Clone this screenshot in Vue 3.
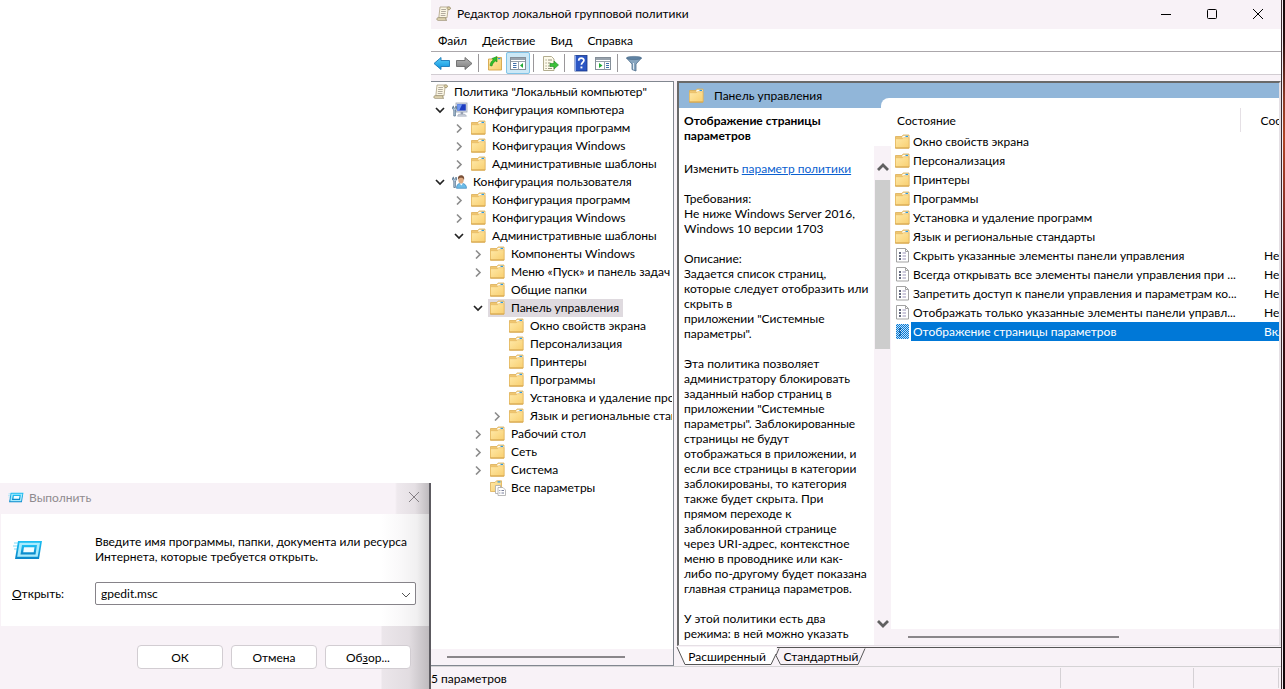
<script setup>
import { ref } from 'vue'

const menus = ['Файл', 'Действие', 'Вид', 'Справка']

const tree = [
  { level: 0, icon: 'scroll', text: 'Политика "Локальный компьютер"' },
  { level: 1, icon: 'computer', text: 'Конфигурация компьютера', state: 'open' },
  { level: 2, icon: 'folder', text: 'Конфигурация программ', state: 'closed' },
  { level: 2, icon: 'folder', text: 'Конфигурация Windows', state: 'closed' },
  { level: 2, icon: 'folder', text: 'Административные шаблоны', state: 'closed' },
  { level: 1, icon: 'user', text: 'Конфигурация пользователя', state: 'open' },
  { level: 2, icon: 'folder', text: 'Конфигурация программ', state: 'closed' },
  { level: 2, icon: 'folder', text: 'Конфигурация Windows', state: 'closed' },
  { level: 2, icon: 'folder', text: 'Административные шаблоны', state: 'open' },
  { level: 3, icon: 'folder', text: 'Компоненты Windows', state: 'closed' },
  { level: 3, icon: 'folder', text: 'Меню «Пуск» и панель задач', state: 'closed' },
  { level: 3, icon: 'folder', text: 'Общие папки' },
  { level: 3, icon: 'folder', text: 'Панель управления', state: 'open', selected: true },
  { level: 4, icon: 'folder', text: 'Окно свойств экрана' },
  { level: 4, icon: 'folder', text: 'Персонализация' },
  { level: 4, icon: 'folder', text: 'Принтеры' },
  { level: 4, icon: 'folder', text: 'Программы' },
  { level: 4, icon: 'folder', text: 'Установка и удаление программ' },
  { level: 4, icon: 'folder', text: 'Язык и региональные стандарты', state: 'closed' },
  { level: 3, icon: 'folder', text: 'Рабочий стол', state: 'closed' },
  { level: 3, icon: 'folder', text: 'Сеть', state: 'closed' },
  { level: 3, icon: 'folder', text: 'Система', state: 'closed' },
  { level: 3, icon: 'allsettings', text: 'Все параметры' },
]

const rows = [
  { icon: 'folder', name: 'Окно свойств экрана', state: '' },
  { icon: 'folder', name: 'Персонализация', state: '' },
  { icon: 'folder', name: 'Принтеры', state: '' },
  { icon: 'folder', name: 'Программы', state: '' },
  { icon: 'folder', name: 'Установка и удаление программ', state: '' },
  { icon: 'folder', name: 'Язык и региональные стандарты', state: '' },
  { icon: 'setting', name: 'Скрыть указанные элементы панели управления', state: 'Не задана' },
  { icon: 'setting', name: 'Всегда открывать все элементы панели управления при ...', state: 'Не задана' },
  { icon: 'setting', name: 'Запретить доступ к панели управления и параметрам ко...', state: 'Не задана' },
  { icon: 'setting', name: 'Отображать только указанные элементы панели управл...', state: 'Не задана' },
  { icon: 'settingsel', name: 'Отображение страницы параметров', state: 'Включена', selected: true },
]

const requirements = ['Не ниже Windows Server 2016,', 'Windows 10 версии 1703'].join('\n')

const description = [
  'Задается список страниц,',
  'которые следует отобразить или',
  'скрыть в',
  'приложении "Системные',
  'параметры".',
  '',
  'Эта политика позволяет',
  'администратору блокировать',
  'заданный набор страниц в',
  'приложении "Системные',
  'параметры". Заблокированные',
  'страницы не будут',
  'отображаться в приложении, и',
  'если все страницы в категории',
  'заблокированы, то категория',
  'также будет скрыта. При',
  'прямом переходе к',
  'заблокированной странице',
  'через URI-адрес, контекстное',
  'меню в проводнике или как-',
  'либо по-другому будет показана',
  'главная страница параметров.',
  '',
  'У этой политики есть два',
  'режима: в ней можно указать',
].join('\n')

const command = ref('gpedit.msc')
</script>

<template>
  <svg class="defs" aria-hidden="true">
    <defs>
      <linearGradient id="gFolder" x1="0" y1="0" x2="1" y2="1">
        <stop offset="0" stop-color="#ffe9a8" />
        <stop offset="1" stop-color="#f8cf70" />
      </linearGradient>
      <linearGradient id="gBlue" x1="0" y1="0" x2="0" y2="1">
        <stop offset="0" stop-color="#5cd0fa" />
        <stop offset="1" stop-color="#0a90dc" />
      </linearGradient>
      <linearGradient id="gGray" x1="0" y1="0" x2="0" y2="1">
        <stop offset="0" stop-color="#b8b8b8" />
        <stop offset="1" stop-color="#7c7c7c" />
      </linearGradient>
      <linearGradient id="gRun" x1="0" y1="0" x2="0" y2="1">
        <stop offset="0" stop-color="#1cc0f4" />
        <stop offset="1" stop-color="#0a86c8" />
      </linearGradient>
      <pattern id="pDots" width="2" height="2" patternUnits="userSpaceOnUse">
        <rect width="2" height="2" fill="#c4e0f6" />
        <rect width="1" height="1" fill="#0078d7" />
        <rect x="1" y="1" width="1" height="1" fill="#0078d7" />
      </pattern>
    </defs>
    <symbol id="folder" viewBox="0 0 16 16">
      <path d="M.5 14V2.500h6.500l1-1.500h6v13z" fill="#efc670" stroke="#dcae55" stroke-width=".8" />
      <rect x="7.500" y="1.800" width="6" height="2.200" fill="#fffdf4" />
      <rect x="10.500" y="1.800" width="2.500" height="1.200" fill="#2f9be0" />
      <path d="M.5 14V4.700h7l1-1H14V14z" fill="url(#gFolder)" stroke="#e5b962" stroke-width=".7" />
      <path d="M.2 14h14" stroke="#d3a147" stroke-width=".9" />
    </symbol>
    <symbol id="scroll" viewBox="0 0 16 16">
      <path d="M4 1h9c1.400 0 1.800 2.200.2 2.600H12l-1 8.200H2.800z" fill="#fbf6e4" stroke="#a09472" stroke-width=".7" />
      <path d="M11.600 1c-.8.800-.7 2.300.4 2.600h1.600c1.400-.4 1-2.600-.3-2.600z" fill="#ddd0a6" stroke="#8a7e5c" stroke-width=".6" />
      <path d="M1.800 11.800H10c-.6 1 0 2.300.8 2.500H2c-1.500 0-1.700-2.200-.2-2.500z" fill="#eadfbb" stroke="#8a7e5c" stroke-width=".7" />
      <path d="M5.300 3.500h4.700M5.100 5.500h4.700M4.900 7.500h4.700M4.700 9.500h4.700" stroke="#a9a395" stroke-width=".9" />
    </symbol>
    <symbol id="computer" viewBox="0 0 16 16">
      <rect x="4" y="1" width="11" height="9" fill="#dde2ea" stroke="#97a1b2" stroke-width=".8" />
      <rect x="5.200" y="2.200" width="8.600" height="6.400" fill="#1d3cc0" />
      <path d="M5.200 2.200h5l-3 6.400h-2z" fill="#6f97f0" />
      <path d="M6.500 12.300h6.500l1.500 1.900H5.500z" fill="#cfd4dd" stroke="#97a1b2" stroke-width=".6" />
      <rect x="8.600" y="10" width="2.600" height="2.300" fill="#97a1b2" />
      <path d="M.6 4.800v2.200l1.200 1v6h1.600V8l1.200-1V4.800L3.800 4v2H1.500V4z" fill="#b5cce0" stroke="#476583" stroke-width=".7" />
    </symbol>
    <symbol id="user" viewBox="0 0 16 16">
      <path d="M4.500 14.300c0-3.600 1.600-5 4.700-5s5.300 1.400 5.300 5z" fill="#6cbce8" stroke="#4189bd" stroke-width=".7" />
      <path d="M7.600 9.300l1.700 2.200 1.700-2.200z" fill="#fff" />
      <ellipse cx="9" cy="5.800" rx="2.700" ry="3.700" fill="#deaa82" />
      <path d="M6 5.500C5.600 2.500 7 1.300 9.100 1.300s3.700 1.500 2.900 4.800c-.6-1.500-1-2-2.400-2.400-1.300 0-2.900.4-3.600 1.800z" fill="#7b5138" />
      <path d="M.6 3.800v2.200l1.200 1v6.500h1.600V7l1.200-1V3.800L3.800 3v2H1.500V3z" fill="#b5cce0" stroke="#476583" stroke-width=".7" />
    </symbol>
    <symbol id="allsettings" viewBox="0 0 16 16">
      <path d="M.5 11.500V2.500H5l1.500-1.700h5v10.700z" fill="url(#gFolder)" stroke="#dcae55" stroke-width=".8" />
      <rect x="7.500" y="1.300" width="3" height="1.200" fill="#2f9be0" />
      <path d="M5.500 5.500h5v8h-5z" fill="#fff" stroke="#a8a8a8" stroke-width=".8" />
      <path d="M8 7.500h5l2.500 2.500v5.500H8z" fill="#fff" stroke="#a8a8a8" stroke-width=".8" />
      <path d="M9.300 10.500h1M11.500 10.500h2.500M9.300 13h1M11.500 13h2.500" stroke="#6a7090" stroke-width=".9" />
    </symbol>
    <symbol id="setting" viewBox="0 0 16 16">
      <path d="M1.500.5h9l3 3v10.500h-12z" fill="#fff" stroke="#a3a3a3" />
      <path d="M10.500.5v3h3" fill="none" stroke="#a3a3a3" />
      <path d="M4 5h2M4 8h2M4 11h2" stroke="#333a55" stroke-width="1.400" />
      <path d="M7.500 5h3.500M7.500 8h3.500M7.500 11h3.500" stroke="#9a93b8" />
    </symbol>
    <symbol id="settingsel" viewBox="0 0 16 16">
      <rect x="1" y="0" width="13" height="15" fill="url(#pDots)" />
      <path d="M4 5h2M4 8h2M4 11h2" stroke="#0a4f94" stroke-width="1.400" />
    </symbol>
    <symbol id="run" viewBox="0 0 30 20">
      <path d="M1 3h6M0 6h5M1 9h4" stroke="#7fdcf8" stroke-width="1" />
      <path d="M5 1h24l-3 18H2z" fill="url(#gRun)" />
      <path d="M6.500 2.800h20.500l-2.300 14H4.200z" fill="#a9ebfd" />
      <path d="M9 5h15l-1.500 9.500H7.500z" fill="url(#gRun)" />
      <path d="M11 7.200h10.500l-.8 5H10.200z" fill="#f2fcff" />
    </symbol>
  </svg>

  <main class="desktop">
    <div class="left">
      <section class="run" aria-label="Выполнить">
        <header class="run-title">
          <svg class="run-small"><use href="#run" /></svg>
          <span>Выполнить</span>
          <button class="run-close" aria-label="Закрыть">
            <svg viewBox="0 0 12 12"><path d="M1 1l10 10M11 1L1 11" stroke="#858085" fill="none" /></svg>
          </button>
        </header>
        <div class="run-body">
          <div class="run-intro">
            <svg class="run-big"><use href="#run" /></svg>
            <p>Введите имя программы, папки, документа или ресурса<br />Интернета, которые требуется открыть.</p>
          </div>
          <div class="run-field">
            <label for="cmd"><u>О</u>ткрыть:</label>
            <div class="combo">
              <input id="cmd" v-model="command" type="text" />
              <button aria-label="Показать список">
                <svg viewBox="0 0 10 6"><path d="M1 1l4 4 4-4" stroke="#555" fill="none" /></svg>
              </button>
            </div>
          </div>
        </div>
        <footer class="run-foot">
          <button>ОК</button>
          <button>Отмена</button>
          <button>Об<u>з</u>ор...</button>
        </footer>
      </section>
    </div>

    <section class="editor">
      <header class="title">
        <svg class="ico"><use href="#scroll" /></svg>
        <h1>Редактор локальной групповой политики</h1>
        <div class="caption">
          <button aria-label="Свернуть"><svg viewBox="0 0 12 12"><path d="M1 6.500h10" stroke="#000" /></svg></button>
          <button aria-label="Развернуть"><svg viewBox="0 0 12 12"><rect x="1.500" y="1.500" width="9" height="9" rx="1" stroke="#000" fill="none" /></svg></button>
          <button aria-label="Закрыть"><svg viewBox="0 0 12 12"><path d="M1 1l10 10M11 1L1 11" stroke="#000" /></svg></button>
        </div>
      </header>

      <nav class="menu">
        <button v-for="m in menus" :key="m">{{ m }}</button>
      </nav>

      <div class="toolbar">
        <button aria-label="Назад">
          <svg viewBox="0 0 18 18"><path d="M1 9.500L8 3.500v3h8.500v6H8v3z" fill="url(#gBlue)" stroke="#1a78b8" stroke-width=".9" /></svg>
        </button>
        <button aria-label="Вперед">
          <svg viewBox="0 0 18 18"><path d="M17 9.500l-7-6v3H1.500v6H10v3z" fill="url(#gGray)" stroke="#6a6a6a" stroke-width=".9" /></svg>
        </button>
        <i></i>
        <button aria-label="Вверх на один уровень">
          <svg viewBox="0 0 18 18">
            <path d="M2.500 16V5h6L10 3.500h5.500V16z" fill="url(#gFolder)" stroke="#d6a548" stroke-width=".9" />
            <rect x="12" y="4" width="2.500" height="1.200" fill="#2f9be0" />
            <path d="M4 11.500c.5-3 1.500-4.500 3.500-5.500L6 4.500 11 2.500v5.500L9.500 7C7.500 8 6.500 10 6 12z" fill="#2fc02a" stroke="#1d8a1a" stroke-width=".6" />
          </svg>
        </button>
        <button class="on" aria-label="Показать дерево консоли">
          <svg viewBox="0 0 18 18">
            <rect x="1.500" y="3.500" width="15" height="12" fill="#fff" stroke="#858f99" />
            <path d="M2 5h14" stroke="#98a2ac" stroke-width="2" />
            <path d="M2 7.500h14" stroke="#98a2ac" />
            <path d="M9.500 8v7.500" stroke="#98a2ac" />
            <path d="M4 9.500h3.500M4 11.500h3.500M4 13.500h3.500" stroke="#3f6ea8" />
            <path d="M14 9v5l-3-2.500z" fill="#22ac38" />
          </svg>
        </button>
        <i></i>
        <button aria-label="Экспортировать список">
          <svg viewBox="0 0 18 18">
            <path d="M2.500 2.500h8l2.500 2.500v11.500H2.500z" fill="#fdfaea" stroke="#b3ad90" />
            <path d="M4.500 6h1.200M7 6h4M4.500 9h1.200M7 9h2.500M4.500 12h1.200M7 12h2.500M4.500 14.500h1.200M7 14.500h4" stroke="#8a8770" stroke-width=".9" />
            <path d="M9 9.500h4V7l4.500 4-4.500 4v-2.500H9z" fill="#3cc23a" stroke="#1d8a25" stroke-width=".6" />
          </svg>
        </button>
        <i></i>
        <button aria-label="Справка">
          <svg viewBox="0 0 18 18">
            <rect x="3" y="1.500" width="12" height="15.500" fill="#2b56c4" stroke="#173684" stroke-width=".8" />
            <path d="M3.500 1.500V17" stroke="#89a8ee" />
            <path d="M6.700 6.700c0-3.400 5.400-3.300 5.200-.2-.1 1.900-2.500 2-2.500 4.300" fill="none" stroke="#fff" stroke-width="1.700" />
            <rect x="8.500" y="12.500" width="1.900" height="1.900" fill="#fff" />
          </svg>
        </button>
        <button aria-label="Показать область действий">
          <svg viewBox="0 0 18 18">
            <rect x="1.500" y="3.500" width="15" height="12" fill="#fff" stroke="#858f99" />
            <path d="M2 5h14" stroke="#98a2ac" stroke-width="2" />
            <path d="M2 7.500h14" stroke="#98a2ac" />
            <path d="M10.500 8v7.500" stroke="#98a2ac" />
            <path d="M12 9.500h3M12 11.500h3M12 13.500h3" stroke="#3f6ea8" />
            <path d="M5 9v5l3.500-2.500z" fill="#22ac38" />
          </svg>
        </button>
        <i></i>
        <button aria-label="Фильтр">
          <svg viewBox="0 0 18 18">
            <path d="M1.500 4l5.500 6v5.500l4 1.500v-7l5.500-6z" fill="#87a5bf" stroke="#4d6d8b" stroke-width=".8" />
            <ellipse cx="9" cy="4" rx="7.500" ry="1.600" fill="#5f82a3" stroke="#4d6d8b" stroke-width=".6" />
            <path d="M8.500 9v6.500" stroke="#dfeaf3" />
          </svg>
        </button>
      </div>

      <div class="panes">
        <div class="tree-pane">
          <ul class="tree">
            <li v-for="(n, i) in tree" :key="i" :style="{ '--level': Math.max(n.level - 1, 0) }">
              <span v-if="n.level" class="exp">
                <button v-if="n.state" :aria-label="n.state === 'open' ? 'Свернуть ветвь' : 'Развернуть ветвь'">
                  <svg v-if="n.state === 'open'" viewBox="0 0 10 10"><path d="M1 3l4 4 4-4" stroke="#222" stroke-width="1.700" fill="none" /></svg>
                  <svg v-else viewBox="0 0 10 10"><path d="M3 1.500l4 4-4 4" stroke="#8c8c8c" stroke-width="1.600" fill="none" /></svg>
                </button>
              </span>
              <span class="node" :class="{ sel: n.selected }">
                <svg class="ico"><use :href="'#' + n.icon" /></svg>{{ n.text }}
              </span>
            </li>
          </ul>
          <div class="hbar tree-bar"><b></b></div>
        </div>

        <div class="right">
          <div class="result">
            <div class="head">
              <h2><svg class="ico"><use href="#folder" /></svg>Панель управления</h2>
              <div class="notch"></div>
            </div>
            <div class="split">
              <article class="info">
                <h3>Отображение страницы параметров</h3>
                <p>Изменить <a href="#">параметр политики</a></p>
                <p>Требования:<br />{{ requirements }}</p>
                <p>Описание:<br />{{ description }}</p>
              </article>
              <div class="vbar">
                <button aria-label="Прокрутить вверх"><svg viewBox="0 0 12 8"><path d="M1 7l5-5 5 5" stroke="#606060" stroke-width="2.800" fill="none" /></svg></button>
                <b></b>
                <button class="down" aria-label="Прокрутить вниз"><svg viewBox="0 0 12 8"><path d="M1 1l5 5 5-5" stroke="#606060" stroke-width="2.800" fill="none" /></svg></button>
              </div>
              <div class="list">
                <div class="list-view">
                  <table>
                    <colgroup><col class="c-ico" /><col class="c-name" /><col class="c-state" /></colgroup>
                    <thead>
                      <tr><th colspan="2" scope="col">Состояние</th><th scope="col" class="second">Состояние</th></tr>
                    </thead>
                    <tbody>
                      <tr v-for="r in rows" :key="r.name" :class="{ sel: r.selected }">
                        <td><svg class="ico"><use :href="'#' + r.icon" /></svg></td>
                        <td>{{ r.name }}</td>
                        <td class="st">{{ r.state }}</td>
                      </tr>
                    </tbody>
                  </table>
                </div>
                <div class="hbar list-bar"><b></b></div>
              </div>
            </div>
          </div>
          <div class="tabs" role="tablist">
            <button class="tab active" role="tab" aria-selected="true">
              <svg viewBox="0 0 100 18" preserveAspectRatio="none"><path d="M0 0l8 17.500h86L99 8V0z" fill="#fff" /><path d="M0 0l8 17.500h86L99 7" stroke="#555" fill="none" /></svg>
              <span>Расширенный</span>
            </button>
            <button class="tab" role="tab" aria-selected="false">
              <svg viewBox="0 0 88 18" preserveAspectRatio="none"><path d="M2 .5L-1 8l4.500 9.500H81L88 .5" stroke="#555" fill="none" /></svg>
              <span>Стандартный</span>
            </button>
            <div class="rest"></div>
          </div>
        </div>
      </div>

      <footer class="status">
        <span class="count">5 параметров</span>
        <span class="cell wide"></span>
        <span class="cell"></span>
      </footer>
    </section>
    <div class="edge"></div>
  </main>
</template>

<style>
html,
body {
  margin: 0;
  background: #fff;
}
</style>

<style scoped>
.defs {
  position: absolute;
  width: 0;
  height: 0;
}
.desktop {
  display: grid;
  grid-template-columns: 431px minmax(0, 1fr) 4px;
  height: 100vh;
  overflow: hidden;
  font-family: Lato, "Open Sans", "Noto Sans", sans-serif;
  font-size: 12px;
  line-height: 15px;
  color: #000;
}
button {
  font: inherit;
  color: inherit;
  background: none;
  border: 0;
  padding: 0;
  margin: 0;
}
h1,
h2,
h3,
p,
ul {
  margin: 0;
  padding: 0;
  font-size: inherit;
  font-weight: 400;
  list-style: none;
}
.ico {
  width: 16px;
  height: 16px;
  flex: none;
}

/* Run dialog */
.left {
  display: flex;
  flex-direction: column;
  justify-content: flex-end;
}
.run {
  background: #f8f2f7;
  border-right: 2px solid #5c5a60;
}
.run-title {
  display: flex;
  align-items: center;
  height: 31px;
  padding: 0 9px 3px 8px;
  box-sizing: border-box;
  color: #8f8a8f;
  background: linear-gradient(90deg, transparent calc(100% - 34px), rgba(90, 90, 90, 0.06) calc(100% - 32px), rgba(90, 90, 90, 0.12) calc(100% - 14px), rgba(90, 90, 90, 0.36));
}
.run-small {
  width: 16px;
  height: 11px;
  margin-right: 5px;
}
.run-close {
  margin-left: auto;
}
.run-close svg {
  display: block;
  width: 12px;
  height: 12px;
}
.run-body {
  background: linear-gradient(90deg, #fff calc(100% - 48px), #f9f8f9 calc(100% - 28px), #f1f0f1 calc(100% - 12px), #d6d5d6);
  height: 112px;
  margin-left: 1px;
  padding: 20px 13px 0 11px;
  box-sizing: border-box;
}
.run-intro {
  display: flex;
}
.run-intro p {
  white-space: nowrap;
}
.run-big {
  flex: none;
  width: 30px;
  height: 20px;
  margin: 6px 52px 0 1px;
}
.run-field {
  display: flex;
  align-items: center;
  margin-top: 18px;
}
.run-field label {
  width: 83px;
}
.combo {
  flex: 1;
  display: flex;
  height: 21px;
  border: 1px solid #868389;
  border-radius: 2px;
  background: #fff;
}
.combo input {
  flex: 1;
  min-width: 0;
  border: 0;
  outline: 0;
  padding: 0 5px;
  background: none;
  font: inherit;
}
.combo button {
  width: 18px;
}
.combo svg {
  width: 10px;
  height: 6px;
}
.run-foot {
  display: flex;
  justify-content: flex-end;
  gap: 8px;
  padding: 19px 18px 20px;
  background: linear-gradient(90deg, transparent calc(100% - 48px), rgba(90, 90, 90, 0.08) calc(100% - 47px), rgba(90, 90, 90, 0.14) calc(100% - 20px), rgba(90, 90, 90, 0.36));
}
.run-foot button {
  width: 86px;
  height: 24px;
  background: #fff;
  border: 1px solid #d2cdd2;
  border-radius: 4px;
}

/* Editor window */
.editor {
  display: flex;
  flex-direction: column;
  min-width: 0;
  min-height: 0;
  background: #f8f2f7;
}
.title {
  display: flex;
  align-items: center;
  height: 29px;
  padding: 0 0 2px 5px;
  box-sizing: border-box;
}
.title h1 {
  margin-left: 5px;
}
.caption {
  display: flex;
  margin-left: auto;
}
.caption button {
  display: flex;
  align-items: center;
  justify-content: center;
  width: 46px;
  height: 27px;
}
.caption svg {
  width: 12px;
  height: 12px;
}
.menu {
  display: flex;
  gap: 15px;
  padding: 0 7px;
  height: 22px;
  background: #fff;
  border-bottom: 1px solid #aba7ab;
}
.toolbar {
  display: flex;
  align-items: center;
  height: 22px;
  background: #fff;
  border-bottom: 1px solid #d2cdd2;
}
.toolbar button {
  width: 22px;
  height: 22px;
  display: flex;
  align-items: center;
  justify-content: center;
}
.toolbar button.on {
  width: 24px;
  background: #cce8f6;
  outline: 1px solid #80c4e8;
  outline-offset: -1px;
  border-radius: 2px;
}
.toolbar svg {
  width: 18px;
  height: 18px;
}
.toolbar i {
  width: 1px;
  height: 18px;
  margin: 0 5px 0 3px;
  background: #9a979a;
}
.panes {
  flex: 1;
  min-height: 0;
  display: grid;
  grid-template-columns: 243px minmax(0, 1fr);
  column-gap: 3px;
  padding-top: 6px;
}
.tree-pane {
  display: flex;
  flex-direction: column;
  min-height: 0;
  background: #fff;
  border: 1px solid #828790;
  border-left: 0;
}
.tree {
  flex: 1;
  min-height: 0;
  overflow: hidden;
  padding-top: 1px;
  margin-right: 1px;
}
.tree li {
  display: flex;
  height: 18px;
  line-height: 18px;
  white-space: nowrap;
  padding-left: calc(var(--level) * 19px);
}
.exp {
  flex: none;
  width: 19px;
}
.exp button {
  display: flex;
  align-items: center;
  justify-content: center;
  width: 18px;
  height: 18px;
}
.exp svg {
  width: 10px;
  height: 10px;
}
.node {
  display: flex;
  align-items: center;
  gap: 5px;
  padding: 0 4px 0 2px;
}
.node.sel {
  background: #dfdadf;
}
.hbar {
  height: 16px;
  display: flex;
  align-items: center;
  background: #f8f2f7;
  flex: none;
}
.hbar b {
  height: 2px;
  background: #8a868a;
}
.tree-bar b {
  width: 178px;
  margin-left: 16px;
}
.list-bar b {
  width: 211px;
  margin-left: 17px;
}

.right {
  display: flex;
  flex-direction: column;
  min-width: 0;
  min-height: 0;
}
.result {
  flex: 1;
  min-height: 0;
  display: flex;
  flex-direction: column;
  background: #fff;
  border: 2px solid #696969;
  border-right-color: #e5e0e5;
  border-bottom-color: #e5e0e5;
  border-bottom-width: 1px;
}
.head {
  display: flex;
  align-items: center;
  height: 25px;
  flex: none;
  background: #91b6d9;
}
.head h2 {
  display: flex;
  align-items: center;
  gap: 9px;
  width: 202px;
  padding-left: 10px;
  box-sizing: border-box;
}
.notch {
  flex: 1;
  align-self: flex-end;
  height: 10px;
  background: #fff;
  border-top-left-radius: 8px;
}
.split {
  flex: 1;
  min-height: 0;
  display: grid;
  grid-template-columns: 195px 17px minmax(0, 1fr);
}
.info {
  overflow: hidden;
  padding: 5px 5px 0;
  min-height: 0;
}
.info h3 {
  font-weight: 700;
  margin-bottom: 18px;
  width: 170px;
}
.info p {
  margin-bottom: 15px;
  white-space: pre;
}
.info a {
  color: #0a5fd0;
}
.vbar {
  display: flex;
  flex-direction: column;
  margin-top: 38px;
  background: #f8f2f7;
}
.vbar button {
  height: 34px;
  padding-top: 7px;
}
.vbar button.down {
  margin-top: auto;
  padding: 0 0 10px;
}
.vbar svg {
  width: 12px;
  height: 8px;
}
.vbar b {
  height: 169px;
  margin: 0 1px;
  background: #cdcdcd;
}
.list {
  display: flex;
  flex-direction: column;
  min-width: 0;
  min-height: 0;
}
.list-view {
  flex: 1;
  min-height: 0;
  overflow: hidden;
}
table {
  width: 100%;
  table-layout: fixed;
  border-collapse: collapse;
}
.c-ico {
  width: 20px;
}
.c-state {
  width: 39px;
}
th,
td {
  padding: 0 0 0 2px;
  font-weight: 400;
  text-align: left;
  white-space: nowrap;
  overflow: hidden;
}
th {
  height: 24px;
  padding-left: 6px;
}
th.second {
  border-left: 1px solid #e5e0e5;
  padding-left: 20px;
}
td {
  height: 19px;
}
td:first-child {
  padding-left: 4px;
}
td.st {
  padding-left: 24px;
}
td .ico {
  display: block;
}
tr.sel td:not(:first-child) {
  background: #0078d7;
  color: #fff;
}
.tabs {
  display: flex;
  height: 19px;
  flex: none;
  padding-top: 1px;
}
.tab {
  position: relative;
  width: 88px;
  height: 18px;
  border-top: 1px solid #555;
  box-sizing: border-box;
}
.tab.active {
  width: 100px;
  border-top: 0;
}
.tab svg {
  position: absolute;
  inset: 0;
  width: 100%;
  height: 100%;
  overflow: visible;
}
.tab span {
  position: relative;
}
.rest {
  flex: 1;
  border-top: 1px solid #555;
}
.status {
  display: flex;
  align-items: center;
  height: 22px;
  border-top: 1px solid #d5d3d5;
}
.count {
  flex: 1;
}
.cell {
  width: 84px;
  height: 20px;
  border-left: 1px solid #d5d1d5;
  border-right: 1px solid #d5d1d5;
  margin-right: 2px;
}
.cell.wide {
  width: 132px;
  border-right: 0;
  margin-right: 0;
}
.edge {
  background: linear-gradient(#14090b, #2a0f10 6%, #8a3a28 14%, #b04526 20%, #7a2a2a 35%, #3a1014 50%, #1a0a0c 80%, #14060a);
  border-left: 1px solid #3a2a30;
  box-shadow: inset 1px 0 0 #f4eef2;
}
</style>
